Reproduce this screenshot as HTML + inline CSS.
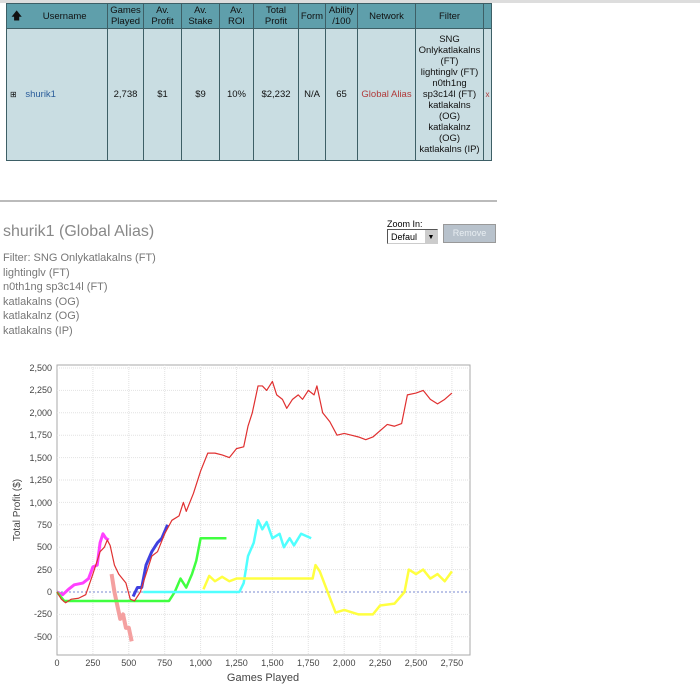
<!DOCTYPE html>
<html><head><meta charset="utf-8"><style>
body{margin:0;width:700px;height:689px;background:#fff;font-family:"Liberation Sans",sans-serif;position:relative;overflow:hidden}
.a{position:absolute}
table{position:absolute;left:6px;top:3px;border-collapse:collapse;font-size:9.5px;color:#111}
td{border:1px solid #3d5f66;text-align:center;padding:0;line-height:11px}
tr.h td{background:#5f9fab;height:24px}
tr.b td{background:#c9dde2;height:131px}
.g{color:#777;font-size:11px;line-height:14.5px}
</style></head><body>
<div class="a" style="left:0;top:0;width:700px;height:3px;background:#ddd"></div>
<table>
<tr class="h"><td style="width:100px"><span style="float:left;margin-left:4px;font-size:11px">&#129093;</span>Username</td><td style="width:35px">Games<br>Played</td><td style="width:37px">Av.<br>Profit</td><td style="width:37px">Av.<br>Stake</td><td style="width:33px">Av.<br>ROI</td><td style="width:44px">Total<br>Profit</td><td style="width:26px">Form</td><td style="width:31px">Ability<br>/100</td><td style="width:57px">Network</td><td style="width:67px">Filter</td><td style="width:7px"></td></tr>
<tr class="b"><td style="text-align:left"><span style="font-size:8px;margin-left:3px">&#8862;</span> <span style="color:#2a5c9a;margin-left:6px">shurik1</span></td><td>2,738</td><td>$1</td><td>$9</td><td>10%</td><td>$2,232</td><td>N/A</td><td>65</td><td style="color:#b03a3a">Global Alias</td><td>SNG<br>Onlykatlakalns<br>(FT)<br>lightinglv (FT)<br>n0th1ng<br>sp3c14l (FT)<br>katlakalns<br>(OG)<br>katlakalnz<br>(OG)<br>katlakalns (IP)</td><td style="color:#b03a3a;font-size:8px">x</td></tr>
</table>
<div class="a" style="left:0;top:200px;width:497px;height:2px;background:#bbb"></div>
<div class="a" style="left:3px;top:223px;font-size:16px;color:#888">shurik1 (Global Alias)</div>
<div class="a g" style="left:3px;top:251px">Filter: SNG Onlykatlakalns (FT)<br>lightinglv (FT)<br>n0th1ng sp3c14l (FT)<br>katlakalns (OG)<br>katlakalnz (OG)<br>katlakalns (IP)</div>
<div class="a" style="left:387px;top:219px;font-size:9px;color:#000">Zoom In:</div>
<div class="a" style="left:387px;top:229px;width:51px;height:15px;border:1px solid #555;border-right-color:#ccc;border-bottom-color:#ccc;background:#fff;font-size:9px;line-height:15px;box-sizing:border-box;padding-left:3px">Defaul<span style="position:absolute;right:0;top:0;width:12px;height:13px;background:#ccc;font-size:7px;text-align:center">&#9660;</span></div>
<div class="a" style="left:443px;top:224px;width:51px;height:17px;background:#b8c2cc;border:1px solid #999;color:#e8eef2;font-size:9px;text-align:center;line-height:17px">Remove</div>
<svg class="a" style="left:0;top:355px" width="480" height="334" viewBox="0 355 480 334" font-family="Liberation Sans, sans-serif" font-size="9" fill="#444">
<rect x="57" y="365" width="413" height="290" fill="#fff" stroke="#aaa"/>
<g stroke="#e2e2e2" stroke-dasharray="1,1">
<line x1="57" x2="470" y1="368" y2="368"/><line x1="57" x2="470" y1="390.4" y2="390.4"/><line x1="57" x2="470" y1="412.8" y2="412.8"/><line x1="57" x2="470" y1="435.2" y2="435.2"/><line x1="57" x2="470" y1="457.6" y2="457.6"/><line x1="57" x2="470" y1="480" y2="480"/><line x1="57" x2="470" y1="502.4" y2="502.4"/><line x1="57" x2="470" y1="524.8" y2="524.8"/><line x1="57" x2="470" y1="547.2" y2="547.2"/><line x1="57" x2="470" y1="569.6" y2="569.6"/><line x1="57" x2="470" y1="614.4" y2="614.4"/><line x1="57" x2="470" y1="636.8" y2="636.8"/>
<line y1="365" y2="655" x1="92.9" x2="92.9"/><line y1="365" y2="655" x1="128.8" x2="128.8"/><line y1="365" y2="655" x1="164.7" x2="164.7"/><line y1="365" y2="655" x1="200.6" x2="200.6"/><line y1="365" y2="655" x1="236.5" x2="236.5"/><line y1="365" y2="655" x1="272.4" x2="272.4"/><line y1="365" y2="655" x1="308.3" x2="308.3"/><line y1="365" y2="655" x1="344.2" x2="344.2"/><line y1="365" y2="655" x1="380.1" x2="380.1"/><line y1="365" y2="655" x1="416" x2="416"/><line y1="365" y2="655" x1="451.9" x2="451.9"/>
</g>
<line x1="57" x2="470" y1="592" y2="592" stroke="#7a8ad0" stroke-dasharray="2,2"/>
<g text-anchor="end"><text x="52" y="371">2,500</text><text x="52" y="393">2,250</text><text x="52" y="416">2,000</text><text x="52" y="438">1,750</text><text x="52" y="461">1,500</text><text x="52" y="483">1,250</text><text x="52" y="506">1,000</text><text x="52" y="528">750</text><text x="52" y="550">500</text><text x="52" y="573">250</text><text x="52" y="595">0</text><text x="52" y="617">-250</text><text x="52" y="640">-500</text></g>
<g text-anchor="middle"><text x="57" y="666">0</text><text x="92.9" y="666">250</text><text x="128.8" y="666">500</text><text x="164.7" y="666">750</text><text x="200.6" y="666">1,000</text><text x="236.5" y="666">1,250</text><text x="272.4" y="666">1,500</text><text x="308.3" y="666">1,750</text><text x="344.2" y="666">2,000</text><text x="380.1" y="666">2,250</text><text x="416" y="666">2,500</text><text x="451.9" y="666">2,750</text>
<text x="263" y="681" font-size="11">Games Played</text>
<text transform="translate(20,510) rotate(-90)" font-size="10">Total Profit ($)</text></g>
<g transform="translate(57,592) scale(0.1436,-0.0896)" fill="none" stroke-linejoin="round">
<polyline vector-effect="non-scaling-stroke" stroke="#f4a0a0" stroke-width="4" points="380,200 400,0 420,-150 440,-300 460,-250 480,-400 500,-400 520,-550"/>
<polyline vector-effect="non-scaling-stroke" stroke="#ff40ff" stroke-width="3" points="0,0 40,-30 80,30 120,80 180,100 220,150 250,280 280,300 300,550 320,650 340,600 360,580"/>
<polyline vector-effect="non-scaling-stroke" stroke="#40ff40" stroke-width="2.5" points="0,0 50,-100 780,-100 820,0 860,150 900,50 940,200 970,350 1000,600 1180,600"/>
<polyline vector-effect="non-scaling-stroke" stroke="#50ffff" stroke-width="2.5" points="600,0 1270,0 1300,100 1330,400 1370,550 1400,800 1430,700 1460,780 1500,600 1550,650 1580,500 1620,600 1650,520 1700,650 1770,600"/>
<polyline vector-effect="non-scaling-stroke" stroke="#ffff40" stroke-width="2.5" points="1020,30 1060,180 1100,120 1150,170 1200,120 1250,150 1780,150 1800,300 1830,230 1880,20 1940,-230 2000,-200 2100,-250 2200,-250 2250,-150 2350,-130 2420,0 2450,250 2500,200 2550,250 2600,150 2650,200 2700,120 2750,230"/>
<polyline vector-effect="non-scaling-stroke" stroke="#4040e0" stroke-width="3" points="530,-50 560,50 590,50 620,300 660,450 700,550 730,600 770,750"/>
<polyline vector-effect="non-scaling-stroke" stroke="#e03030" stroke-width="1.2" points="0,0 30,-80 60,-120 100,-80 150,-70 200,-30 250,200 300,450 330,500 350,580 370,520 400,300 430,200 480,100 510,-80 540,-100 580,0 620,200 660,400 700,450 750,650 800,800 850,850 880,1000 900,900 950,1100 1000,1350 1050,1550 1100,1550 1150,1530 1200,1500 1250,1600 1300,1620 1330,1850 1360,2000 1400,2300 1430,2300 1460,2250 1500,2350 1530,2200 1570,2150 1600,2050 1640,2150 1680,2200 1710,2150 1750,2250 1790,2200 1810,2300 1850,2000 1900,1900 1950,1750 2000,1770 2050,1750 2100,1730 2150,1700 2200,1730 2250,1800 2300,1870 2350,1850 2400,1880 2440,2200 2500,2220 2550,2250 2600,2150 2650,2100 2700,2150 2750,2220"/>
</g>
</svg>
</body></html>
